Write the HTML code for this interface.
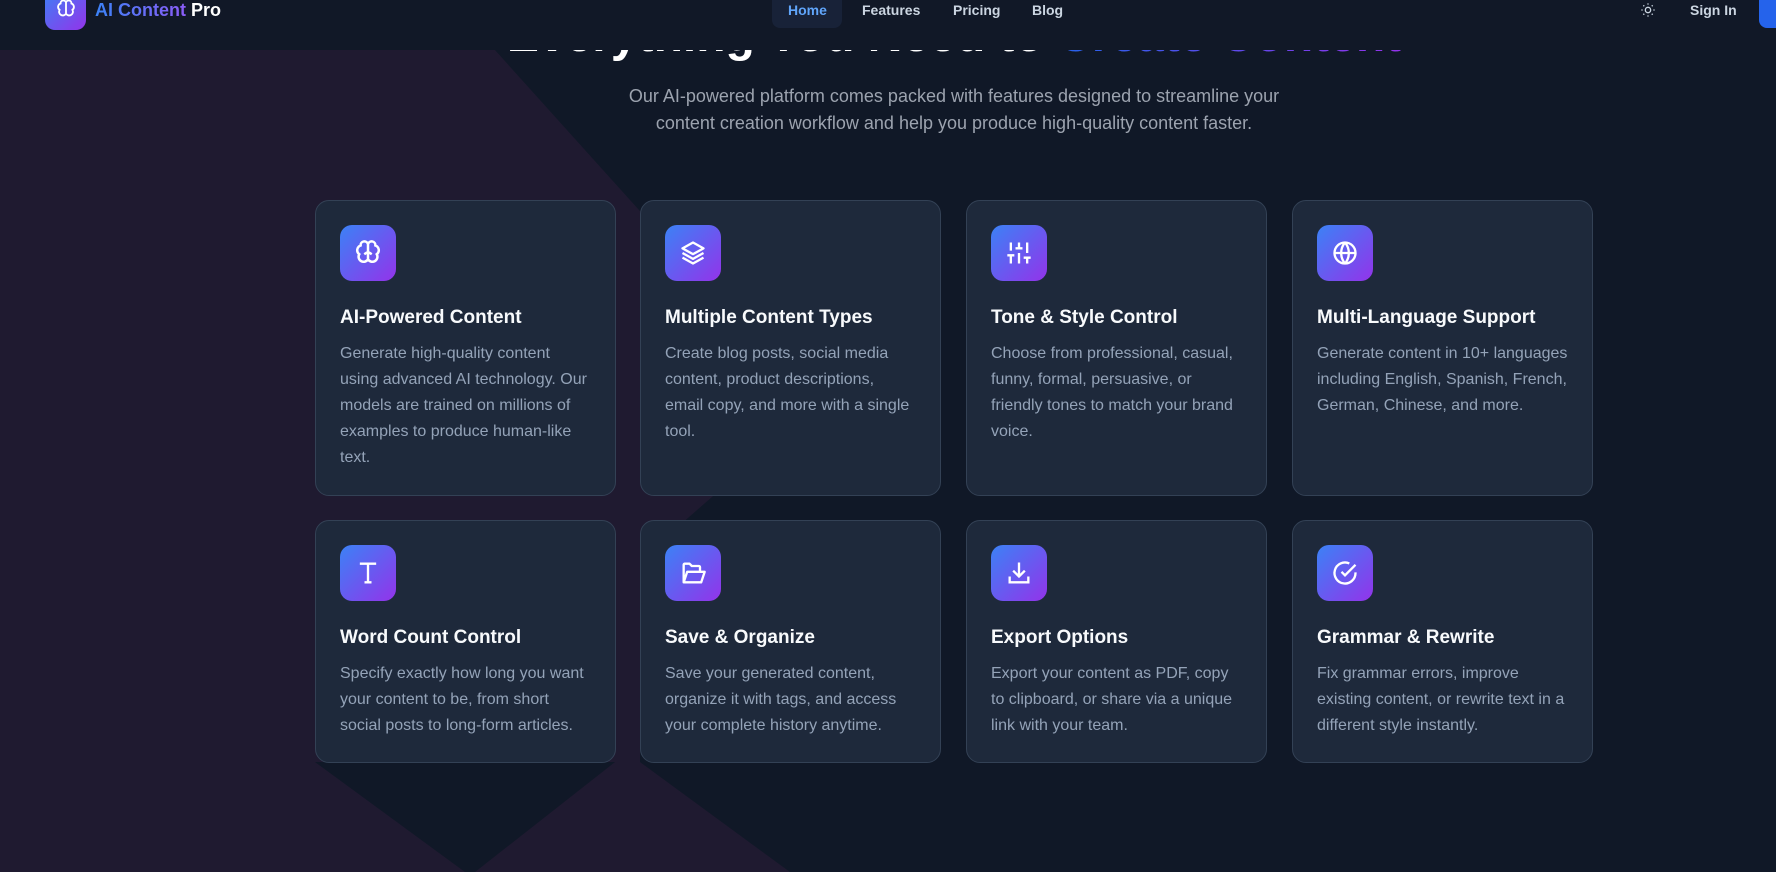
<!DOCTYPE html>
<html><head><meta charset="utf-8"><style>
*{box-sizing:border-box;margin:0;padding:0}
html,body{width:1776px;height:872px;overflow:hidden;background:#101827;font-family:"Liberation Sans",sans-serif}
.abs{position:absolute}
nav{position:absolute;left:0;top:0;width:1776px;height:50px;background:#111827;z-index:5}
.nl{position:absolute;top:2px;font-size:14px;color:#cbd5e1;font-weight:bold}
.card{position:absolute;width:301px;background:#1e293b;border:1px solid #334155;border-radius:14px;padding:24px 24px}
.ic{width:56px;height:56px;border-radius:12px;background:linear-gradient(135deg,#3b82f6,#9333ea);display:flex;align-items:center;justify-content:center}
.card h3{margin-top:24px;font-size:19px;color:#f8fafc;font-weight:bold;line-height:26px}
.card p{margin-top:10px;font-size:16px;line-height:26px;color:#94a3b8;white-space:nowrap}
</style></head><body>
<svg class="abs" style="left:0;top:0" width="1776" height="872">
<g fill="#1f1a30">
<polygon points="0,50 495,50 720,300 720,490 640,560 640,762 790,872 475,872 615,762 315,762 465,872 0,872"/>
<polygon points="45,55 86,55 92,50 40,50"/>
</g>
</svg>
<div class="abs" style="left:0;top:8px;width:1908px;text-align:center;font-size:48px;font-weight:bold;color:#fff;line-height:56px;z-index:1">Everything You Need to <span style="background:linear-gradient(90deg,#2563eb,#9333ea);-webkit-background-clip:text;color:transparent">Create Content</span></div>
<nav>
<div class="abs" style="left:45px;top:-12px;width:41px;height:42px;border-radius:10px;background:linear-gradient(135deg,#3b82f6,#9333ea)"></div>
<svg class="abs" style="left:55px;top:-2px" width="22" height="22" viewBox="0 0 24 24" fill="none" stroke="#fff" stroke-width="2"><path d="M12 5a3 3 0 0 0-5.9 1A4 4 0 0 0 5 13a4 4 0 0 0 7 4zM12 5a3 3 0 0 1 5.9 1A4 4 0 0 1 19 13a4 4 0 0 1-7 4zM12 5v13"/></svg>
<div class="abs" style="left:95px;top:0px;font-size:18px;font-weight:bold"><span style="background:linear-gradient(90deg,#3b82f6,#8b5cf6);-webkit-background-clip:text;color:transparent">AI Content</span> <span style="color:#fff">Pro</span></div>
<div class="abs" style="left:772px;top:0;width:70px;height:28px;border-radius:0 0 8px 8px;background:#182238"></div>
<div class="nl" style="left:788px;color:#60a5fa">Home</div>
<div class="nl" style="left:862px">Features</div>
<div class="nl" style="left:953px">Pricing</div>
<div class="nl" style="left:1032px">Blog</div>
<svg class="abs" style="left:1640px;top:2px" width="16" height="16" viewBox="0 0 24 24" fill="none" stroke="#cbd5e1" stroke-width="2"><circle cx="12" cy="12" r="4"/><path d="M12 2v2M12 20v2M2 12h2M20 12h2M5 5l1.4 1.4M17.6 17.6 19 19M5 19l1.4-1.4M17.6 6.4 19 5"/></svg>
<div class="nl" style="left:1690px">Sign In</div>
<div class="abs" style="left:1759px;top:-8px;width:40px;height:36px;border-radius:8px;background:#2563eb"></div>
</nav>
<div class="abs" style="left:0;top:83px;width:1908px;text-align:center;font-size:18px;line-height:27px;color:#9ca3af">Our AI-powered platform comes packed with features designed to streamline your<br>content creation workflow and help you produce high-quality content faster.</div>

<div class="card" style="left:315px;top:200px;height:296px"><div class="ic"><svg width="30" height="30" viewBox="0 0 24 24" fill="none" stroke="#fff" stroke-width="2"><path d="M12 5a3 3 0 0 0-5.9 1A4 4 0 0 0 5 13a4 4 0 0 0 7 4zM12 5a3 3 0 0 1 5.9 1A4 4 0 0 1 19 13a4 4 0 0 1-7 4zM12 5v13M9 13l3-2 3 2"/></svg></div><h3>AI-Powered Content</h3><p>Generate high-quality content<br>using advanced AI technology. Our<br>models are trained on millions of<br>examples to produce human-like<br>text.</p></div>
<div class="card" style="left:640px;top:200px;height:296px"><div class="ic"><svg width="28" height="28" viewBox="0 0 24 24" fill="none" stroke="#fff" stroke-width="2" stroke-linejoin="round"><path d="M12 3 3 8l9 5 9-5zM3 12l9 5 9-5M3 16l9 5 9-5"/></svg></div><h3>Multiple Content Types</h3><p>Create blog posts, social media<br>content, product descriptions,<br>email copy, and more with a single<br>tool.</p></div>
<div class="card" style="left:966px;top:200px;height:296px"><div class="ic"><svg width="28" height="28" viewBox="0 0 24 24" fill="none" stroke="#fff" stroke-width="2"><path d="M5 21v-7M5 10V3M12 21v-9M12 8V3M19 21v-5M19 12V3M2 14h6M9 8h6M16 16h6"/></svg></div><h3>Tone &amp; Style Control</h3><p>Choose from professional, casual,<br>funny, formal, persuasive, or<br>friendly tones to match your brand<br>voice.</p></div>
<div class="card" style="left:1292px;top:200px;height:296px"><div class="ic"><svg width="28" height="28" viewBox="0 0 24 24" fill="none" stroke="#fff" stroke-width="2"><circle cx="12" cy="12" r="9"/><path d="M3 12h18M12 3a14 14 0 0 1 0 18M12 3a14 14 0 0 0 0 18"/></svg></div><h3>Multi-Language Support</h3><p>Generate content in 10+ languages<br>including English, Spanish, French,<br>German, Chinese, and more.</p></div>

<div class="card" style="left:315px;top:520px;height:243px"><div class="ic"><svg width="28" height="28" viewBox="0 0 24 24" fill="none" stroke="#fff" stroke-width="2"><path d="M5 4h14M12 4v16M9 20h6"/></svg></div><h3>Word Count Control</h3><p>Specify exactly how long you want<br>your content to be, from short<br>social posts to long-form articles.</p></div>
<div class="card" style="left:640px;top:520px;height:243px"><div class="ic"><svg width="28" height="28" viewBox="0 0 24 24" fill="none" stroke="#fff" stroke-width="2" stroke-linejoin="round"><path d="M4 20V5a1 1 0 0 1 1-1h4l2 2h6a1 1 0 0 1 1 1v3M4 20l3-9h15l-3 9z"/></svg></div><h3>Save &amp; Organize</h3><p>Save your generated content,<br>organize it with tags, and access<br>your complete history anytime.</p></div>
<div class="card" style="left:966px;top:520px;height:243px"><div class="ic"><svg width="28" height="28" viewBox="0 0 24 24" fill="none" stroke="#fff" stroke-width="2"><path d="M12 3v11M7 10l5 5 5-5M4 15v5h16v-5"/></svg></div><h3>Export Options</h3><p>Export your content as PDF, copy<br>to clipboard, or share via a unique<br>link with your team.</p></div>
<div class="card" style="left:1292px;top:520px;height:243px"><div class="ic"><svg width="28" height="28" viewBox="0 0 24 24" fill="none" stroke="#fff" stroke-width="2"><path d="M21 11.5V12a9 9 0 1 1-5.3-8.2"/><path d="M9 11l3 3 9-9"/></svg></div><h3>Grammar &amp; Rewrite</h3><p>Fix grammar errors, improve<br>existing content, or rewrite text in a<br>different style instantly.</p></div>
</body></html>
